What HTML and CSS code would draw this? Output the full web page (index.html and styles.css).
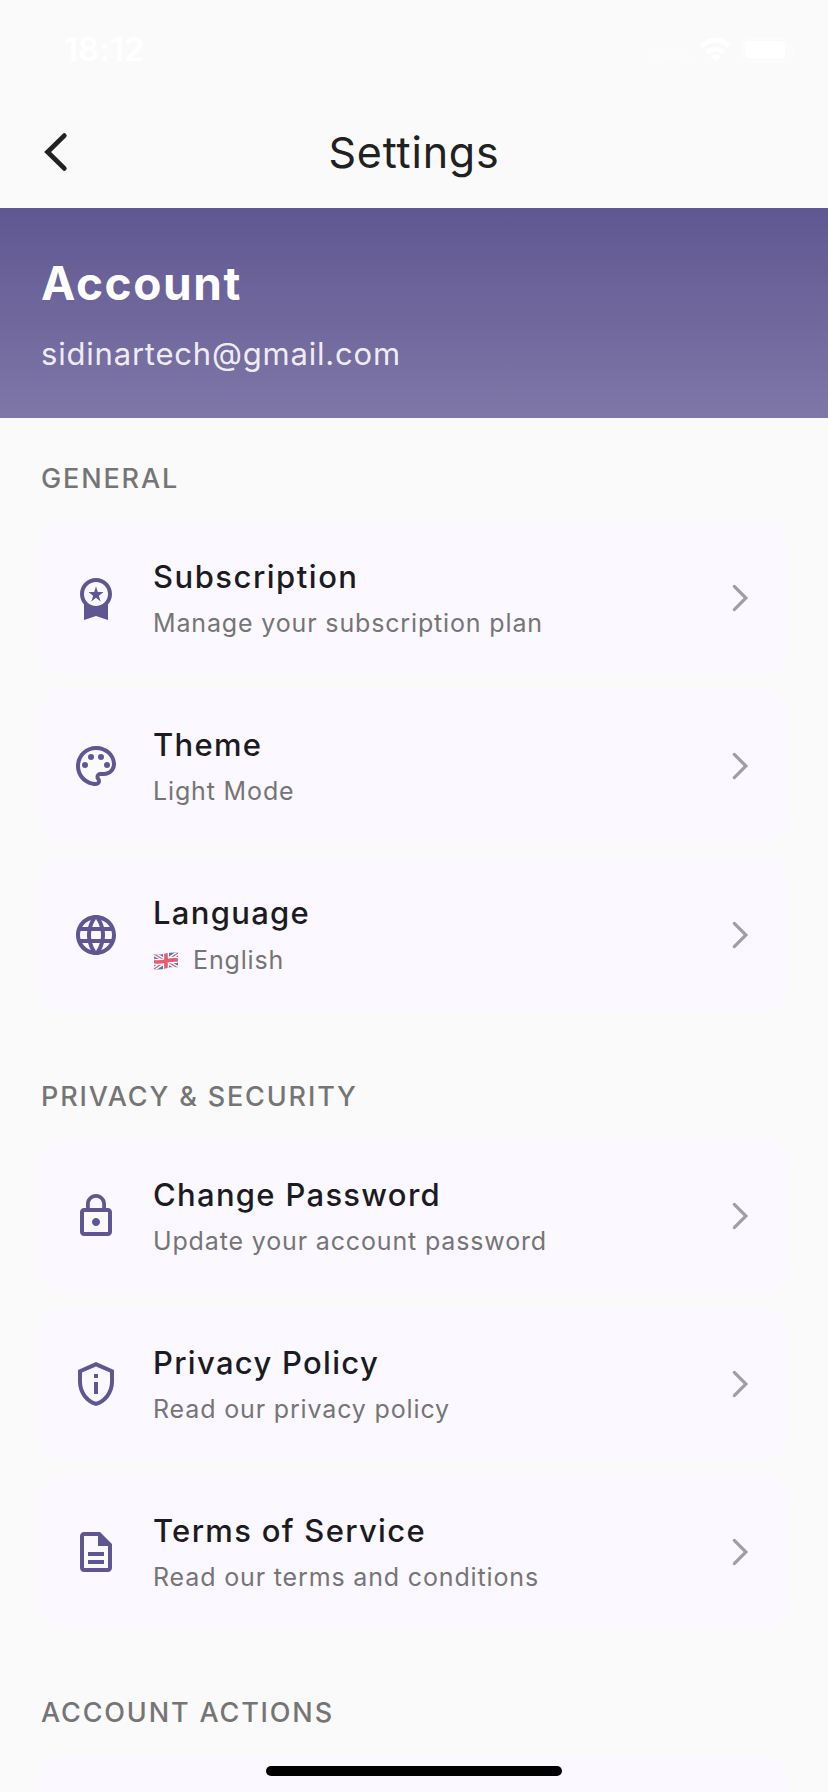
FILE: index.html
```html
<!DOCTYPE html>
<html lang="en">
<head>
<meta charset="utf-8">
<title>Settings</title>
<link rel="stylesheet" href="styles.css">
</head>
<body>
<svg class="defs" width="0" height="0">
  <symbol id="chevron" viewBox="0 0 32 32"><path d="M10.300 4.400 21.900 16 10.300 27.600" fill="none" stroke="currentColor" stroke-width="3.200" stroke-linecap="round"/></symbol>
</svg>
<div class="screen">
  <div class="status">
    <span class="time">18:12</span>
    <svg class="indicators" width="144" height="30" viewBox="652 34 144 30" fill="#fff">
      <g opacity=".35"><circle cx="656.500" cy="57" r="3.500"/><circle cx="667" cy="57" r="3.500"/><circle cx="677" cy="57" r="3.500"/><circle cx="687" cy="57" r="3.500"/></g>
      <path d="M715.500 61 710.800 56.400Q715.500 52.500 720.200 56.400Z"/>
      <g fill="none" stroke="#fff" stroke-width="5"><path d="M707 52.700Q715.500 45.300 724 52.700"/><path d="M701.500 46.200Q715.500 34 729.500 46.200"/></g>
      <rect x="742.500" y="39" width="46" height="22.500" rx="7" fill="none" stroke="#fff" stroke-opacity=".35" stroke-width="2"/>
      <rect x="745" y="41" width="40.500" height="17.500" rx="4.500"/>
      <path d="M791 46q3 1 3 4t-3 4z" opacity=".4"/>
    </svg>
  </div>
  <header class="appbar">
    <svg class="back" width="48" height="48" viewBox="0 0 48 48"><path d="M28.300 7.600 11.600 24 28.300 40.400" fill="none" stroke="#212121" stroke-width="4.800" stroke-linecap="round"/></svg>
    <h1 class="title">Settings</h1>
  </header>
  <section class="account">
    <h2 class="account-title">Account</h2>
    <p class="email">sidinartech@gmail.com</p>
  </section>
  <main class="content">
    <section class="group">
      <h3 class="label">GENERAL</h3>
      <div class="card">
        <svg class="icon" viewBox="0 0 24 24"><path d="M9.680 13.690 12 11.930l2.310 1.760-.88-2.850L15.750 9h-2.840L12 6.190 11.090 9H8.250l2.310 1.840zM20 10c0-4.420-3.580-8-8-8s-8 3.580-8 8c0 2.030.76 3.870 2 5.280V23l6-2 6 2v-7.720c1.240-1.410 2-3.250 2-5.280zm-8-6c3.310 0 6 2.690 6 6s-2.690 6-6 6-6-2.690-6-6 2.690-6 6-6z"/></svg>
        <div class="text"><div class="name wide">Subscription</div><div class="desc">Manage your subscription plan</div></div>
        <svg class="chevron"><use href="#chevron"/></svg>
      </div>
      <div class="card">
        <svg class="icon" viewBox="0 0 24 24"><path d="M12 22C6.490 22 2 17.510 2 12S6.490 2 12 2s10 4.040 10 9c0 3.310-2.690 6-6 6h-1.770c-.28 0-.5.22-.5.5 0 .12.05.23.13.33.41.47.64 1.060.64 1.670A2.500 2.500 0 0 1 12 22zm0-18c-4.410 0-8 3.590-8 8s3.590 8 8 8c.28 0 .5-.22.5-.5a.54.54 0 0 0-.14-.35c-.41-.46-.63-1.050-.63-1.650a2.500 2.500 0 0 1 2.500-2.500H16c2.210 0 4-1.790 4-4 0-3.860-3.590-7-8-7z"/><circle cx="6.500" cy="11.500" r="1.500"/><circle cx="9.500" cy="7.500" r="1.500"/><circle cx="14.500" cy="7.500" r="1.500"/><circle cx="17.500" cy="11.500" r="1.500"/></svg>
        <div class="text"><div class="name">Theme</div><div class="desc">Light Mode</div></div>
        <svg class="chevron"><use href="#chevron"/></svg>
      </div>
      <div class="card tall">
        <svg class="icon" viewBox="0 0 24 24"><path d="M11.990 2C6.470 2 2 6.480 2 12s4.470 10 9.990 10C17.520 22 22 17.520 22 12S17.520 2 11.990 2zm6.930 6h-2.950c-.32-1.250-.78-2.450-1.380-3.560 1.840.63 3.370 1.910 4.330 3.560zM12 4.040c.83 1.200 1.480 2.530 1.910 3.960h-3.820c.43-1.430 1.080-2.760 1.910-3.960zM4.260 14C4.100 13.360 4 12.690 4 12s.1-1.360.26-2h3.380c-.08.66-.14 1.320-.14 2s.06 1.340.14 2H4.260zm.82 2h2.950c.32 1.250.78 2.450 1.380 3.560-1.840-.63-3.370-1.900-4.330-3.560zm2.950-8H5.080c.96-1.660 2.490-2.930 4.330-3.560C8.810 5.550 8.350 6.750 8.030 8zM12 19.960c-.83-1.200-1.480-2.530-1.910-3.960h3.820c-.43 1.430-1.080 2.760-1.910 3.960zM14.340 14H9.660c-.09-.66-.16-1.320-.16-2s.07-1.350.16-2h4.680c.09.65.16 1.320.16 2s-.07 1.340-.16 2zm.25 5.560c.6-1.110 1.060-2.310 1.380-3.560h2.950c-.96 1.650-2.490 2.930-4.330 3.560zM16.360 14c.08-.66.14-1.320.14-2s-.06-1.340-.14-2h3.380c.16.64.26 1.310.26 2s-.1 1.360-.26 2h-3.380z"/></svg>
        <div class="text"><div class="name">Language</div><div class="desc"><svg class="flag" width="24" height="18" viewBox="0 0 24 18"><clipPath id="wave"><path d="M0 2.300Q6 3.300 12 1.500T24 .8V15.200Q18 14.400 12 16.200T0 17.200Z"/></clipPath><g clip-path="url(#wave)"><path fill="#274b9c" d="M0 0h24v18H0z"/><path d="M0 2 24 16M0 17 24 1" stroke="#fff" stroke-width="4"/><path d="M0 2 24 16M0 17 24 1" stroke="#dc2840" stroke-width="1.400"/><path d="M12 0v18M0 9.800Q6 10.500 12 9T24 8" fill="none" stroke="#fff" stroke-width="6"/><path d="M12 0v18M0 9.800Q6 10.500 12 9T24 8" fill="none" stroke="#dc2840" stroke-width="3.600"/></g></svg><span>English</span></div></div>
        <svg class="chevron"><use href="#chevron"/></svg>
      </div>
    </section>
    <section class="group">
      <h3 class="label">PRIVACY &amp; SECURITY</h3>
      <div class="card">
        <svg class="icon" viewBox="0 0 24 24"><path d="M12 17c1.100 0 2-.9 2-2s-.9-2-2-2-2 .9-2 2 .9 2 2 2zm6-9h-1V6c0-2.760-2.240-5-5-5S7 3.240 7 6v2H6c-1.100 0-2 .9-2 2v10c0 1.100.9 2 2 2h12c1.100 0 2-.9 2-2V10c0-1.100-.9-2-2-2zM8.900 6c0-1.710 1.390-3.100 3.100-3.100s3.100 1.390 3.100 3.100v2H8.900V6zM18 20H6V10h12v10z"/></svg>
        <div class="text"><div class="name">Change Password</div><div class="desc">Update your account password</div></div>
        <svg class="chevron"><use href="#chevron"/></svg>
      </div>
      <div class="card">
        <svg class="icon" viewBox="0 0 24 24"><path d="M12 1 3 5v6c0 5.550 3.840 10.740 9 12 5.160-1.260 9-6.450 9-12V5l-9-4zm7 10c0 4.520-2.980 8.690-7 9.930-4.020-1.240-7-5.410-7-9.930V6.300l7-3.110 7 3.110V11zm-8 0h2v6h-2zm0-4h2v2h-2z"/></svg>
        <div class="text"><div class="name">Privacy Policy</div><div class="desc">Read our privacy policy</div></div>
        <svg class="chevron"><use href="#chevron"/></svg>
      </div>
      <div class="card">
        <svg class="icon" viewBox="0 0 24 24"><path d="M8 16h8v2H8zm0-4h8v2H8zm6-10H6c-1.100 0-2 .9-2 2v16c0 1.100.89 2 1.990 2H18c1.100 0 2-.9 2-2V8l-6-6zm4 18H6V4h7v5h5v11z"/></svg>
        <div class="text"><div class="name">Terms of Service</div><div class="desc">Read our terms and conditions</div></div>
        <svg class="chevron"><use href="#chevron"/></svg>
      </div>
    </section>
    <section class="group">
      <h3 class="label">ACCOUNT ACTIONS</h3>
      <div class="card"></div>
    </section>
  </main>
  <div class="home-bar"></div>
</div>
</body>
</html>
```
FILE: styles.css
```css
* { box-sizing: border-box; margin: 0; padding: 0; }
body { background: #fafafa; font-family: Inter, "Liberation Sans", sans-serif; }
.defs { display: block; }
.screen { position: relative; width: 828px; height: 1792px; overflow: hidden; background: #fafafa; }
.status { height: 96px; padding: 30px 32px 0 64px; display: flex; justify-content: space-between; align-items: flex-start; }
.time { color: #fff; font-size: 33px; line-height: 38px; font-weight: 600; letter-spacing: .1px; }
.indicators { display: block; margin-top: 4px; }
.appbar { height: 112px; padding: 0 36px; display: grid; grid-template-columns: 48px 1fr 48px; align-items: center; }
.back { display: block; }
.title { color: #212121; font-size: 43px; line-height: 52px; font-weight: 400; text-align: center; letter-spacing: .8px; }
.account { height: 210px; padding: 46px 41px 0; background: linear-gradient(#5f5791, #7f77a7); }
.account-title { color: #fff; font-size: 46px; line-height: 58px; font-weight: 700; letter-spacing: 1.6px; }
.email { margin-top: 22px; color: rgba(255, 255, 255, .9); font-size: 31px; line-height: 40px; font-weight: 400; letter-spacing: .8px; }
.content { padding: 43px 40px 0; }
.group + .group { margin-top: 67px; }
.label { margin-bottom: 27px; padding: 1px 0 0 1px; color: #757575; font-size: 27px; line-height: 33px; font-weight: 500; letter-spacing: 1.85px; }
.card { height: 152px; padding: 0 32px; display: flex; align-items: center; background: #fbf9ff; border-radius: 24px; }
.card + .card { margin-top: 16px; }
.tall { height: 154px; }
.icon { width: 48px; height: 48px; flex: none; fill: #5f5791; }
.text { flex: 1; margin-left: 33px; padding-top: 4px; white-space: nowrap; }
.name { color: #1c1b1f; font-size: 31px; line-height: 46px; font-weight: 500; letter-spacing: 1.3px; }
.wide { letter-spacing: 1.5px; }
.desc { display: flex; align-items: center; color: #757575; font-size: 25px; line-height: 46px; font-weight: 400; letter-spacing: .85px; }
.tall .desc { line-height: 48px; }
.flag { margin: 1px 15px 0 1px; opacity: .75; }
.chevron { width: 32px; height: 32px; flex: none; color: #a09ea4; }
.home-bar { position: absolute; left: 266px; top: 1766px; width: 296px; height: 10px; border-radius: 5px; background: #000; }
```
